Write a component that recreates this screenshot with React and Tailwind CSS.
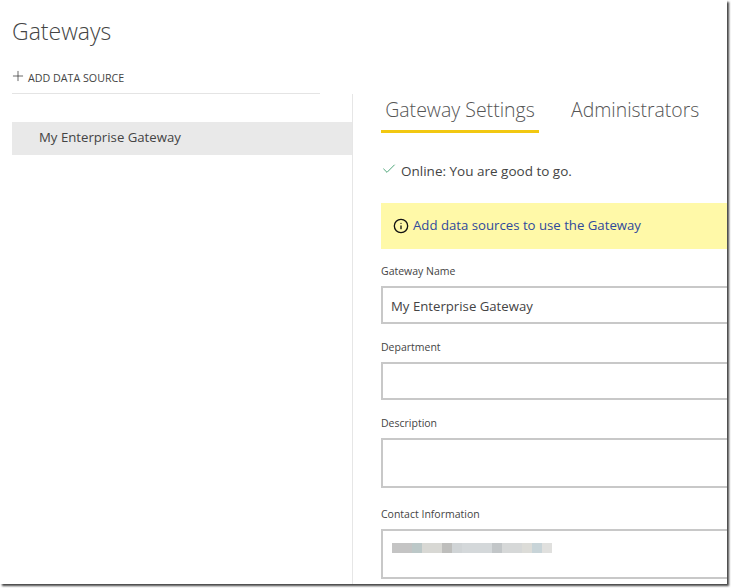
import { Check, Info, Plus } from "lucide-react";

const blurCells = [
  "bg-[#c4c4c4] w-[20px]",
  "bg-[#bcc8c8] w-[10px]",
  "bg-[#d8d8d4] w-[20px]",
  "bg-[#bebebc] w-[10px]",
  "bg-[#d0d4d6] w-[10px]",
  "bg-[#d4d8da] w-[30px]",
  "bg-[#c2c6c8] w-[10px]",
  "bg-[#d6d8d8] w-[20px]",
  "bg-[#dcdcd8] w-[10px]",
  "bg-[#c8d4d8] w-[10px]",
  "bg-[#e0e0de] w-[10px]",
];

function Field({ label, className, children }) {
  return (
    <div className="flex flex-col">
      <label className="text-[10.5px] leading-[15px] text-[#444]">{label}</label>
      <div className={`mt-[7px] -mr-1 border-2 border-[#c8c8c8] bg-white px-2 flex items-center ${className}`}>
        {children}
      </div>
    </div>
  );
}

export default function App() {
  return (
    <div className="w-[731px] h-[588px] bg-white overflow-hidden font-['Open_Sans',sans-serif]">
      <div className="w-[727px] h-[584px] flex flex-col bg-white overflow-hidden shadow-[2px_2px_2px_#444]">
        <h1 className="ml-3 mt-[14px] text-[23px] leading-[34px] font-light text-[#444]">Gateways</h1>
        <div className="ml-3 mt-[13px] w-[308px] h-[33px] flex items-center gap-[2px] border-b border-[#e4e4e4] text-[10.7px] text-[#444]">
          <Plus size={16} strokeWidth={1.1} className="-ml-[2px] -mt-[3px] text-[#333]" />
          <span className="mt-[2px]">ADD DATA SOURCE</span>
        </div>
        <div className="flex flex-1 min-h-0">
          <aside className="w-[353px] shrink-0 pl-3 pt-7 border-r border-[#e6e6e6]">
            <div className="h-[33px] pb-[2px] flex items-center pl-[27px] bg-[#e9e9e9] text-[13.2px] text-[#444]">
              My Enterprise Gateway
            </div>
          </aside>
          <main className="flex-1 min-w-0 pl-7">
            <div className="flex gap-8 h-[39px]">
              <div className="w-[158px] border-b-[3px] border-[#f2c811] text-center text-[19.5px] leading-[32px] font-light text-[#555]">
                Gateway Settings
              </div>
              <div className="text-[19.4px] leading-[32px] font-light text-[#555]">Administrators</div>
            </div>
            <div className="mt-[30px] h-[18px] flex items-center gap-[4px] text-[13.5px] leading-[16px] text-[#444]">
              <Check size={16} strokeWidth={1.4} className="text-[#3f9e6e] -mt-[6px]" />
              <span className="-mt-[2px]">Online: You are good to go.</span>
            </div>
            <div className="mt-[22px] h-[46px] flex items-center gap-[4px] pl-3 bg-[#fff9a8] text-[13.2px] text-[#2f4a9c]">
              <Info size={16} strokeWidth={2} className="text-[#111]" />
              <span>Add data sources to use the Gateway</span>
            </div>
            <div className="mt-[15px] flex flex-col gap-[16px]">
              <Field label="Gateway Name" className="h-[38px] pt-[3px] text-[13.2px] text-[#444]">My Enterprise Gateway</Field>
              <Field label="Department" className="h-[38px]" />
              <Field label="Description" className="h-[50px]" />
              <div className="mt-[3px]">
                <Field label="Contact Information" className="h-[50px] pb-[12px]">
                  <div className="flex h-[10px] ml-[1px]">
                    {blurCells.map((cell, i) => (
                      <span key={i} className={cell} />
                    ))}
                  </div>
                </Field>
              </div>
            </div>
          </main>
        </div>
      </div>
    </div>
  );
}
